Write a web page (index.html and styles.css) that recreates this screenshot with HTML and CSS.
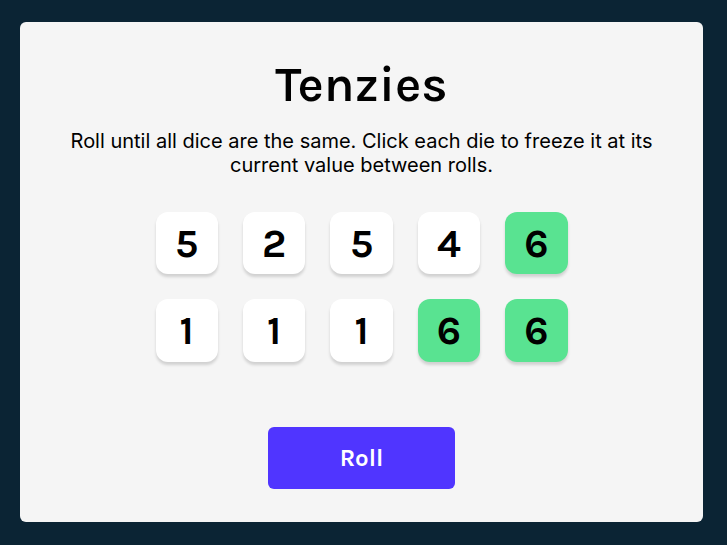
FILE: index.html
```html
<!DOCTYPE html>
<html lang="en">
<head>
<meta charset="utf-8">
<title>Tenzies</title>
<link rel="stylesheet" href="styles.css">
</head>
<body>
<main class="game">
  <h1 class="title">Tenzies</h1>
  <p class="instructions">Roll until all dice are the same. Click each die to freeze it at its current value between rolls.</p>
  <div class="dice">
    <button class="die" type="button">5</button>
    <button class="die" type="button">2</button>
    <button class="die" type="button">5</button>
    <button class="die" type="button">4</button>
    <button class="die held" type="button">6</button>
    <button class="die" type="button">1</button>
    <button class="die" type="button">1</button>
    <button class="die" type="button">1</button>
    <button class="die held" type="button">6</button>
    <button class="die held" type="button">6</button>
  </div>
  <button class="roll" type="button">Roll</button>
</main>
</body>
</html>
```
FILE: styles.css
```css
* {
  box-sizing: border-box;
}

body {
  margin: 0;
  min-height: 100vh;
  padding: 22px 24px 23px 20px;
  display: flex;
  background: #0b2434;
  font-family: Karla, Inter, sans-serif;
}

.game {
  flex: 1;
  padding: 35px 40px 33px;
  display: flex;
  flex-direction: column;
  align-items: center;
  background: #f5f5f5;
  border-radius: 6px;
  color: #000;
}

.title {
  margin: 0;
  font-family: Karla, Inter, sans-serif;
  font-size: 50px;
  line-height: 56px;
  font-weight: 600;
}

.instructions {
  margin: 16px 0 0;
  max-width: 600px;
  font-family: Inter, sans-serif;
  font-size: 20px;
  line-height: 24px;
  font-weight: 400;
  text-align: center;
}

.dice {
  margin-top: 35px;
  width: 412px;
  max-width: 100%;
  display: grid;
  grid-template-columns: repeat(5, 1fr);
  gap: 25px;
}

.die {
  aspect-ratio: 1;
  padding: 0;
  border: 0;
  border-radius: 12px;
  background: #fff;
  box-shadow: 0 3px 3px rgba(0, 0, 0, 0.15);
  color: #000;
  font-family: Karla, Inter, sans-serif;
  font-size: 40px;
  font-weight: 700;
  cursor: pointer;
}

.held {
  background: #59e391;
}

.roll {
  margin-top: auto;
  width: 187px;
  height: 62px;
  border: 0;
  border-radius: 6px;
  background: #5035ff;
  color: #fff;
  font-family: Karla, Inter, sans-serif;
  font-size: 24px;
  font-weight: 700;
  cursor: pointer;
}
```
